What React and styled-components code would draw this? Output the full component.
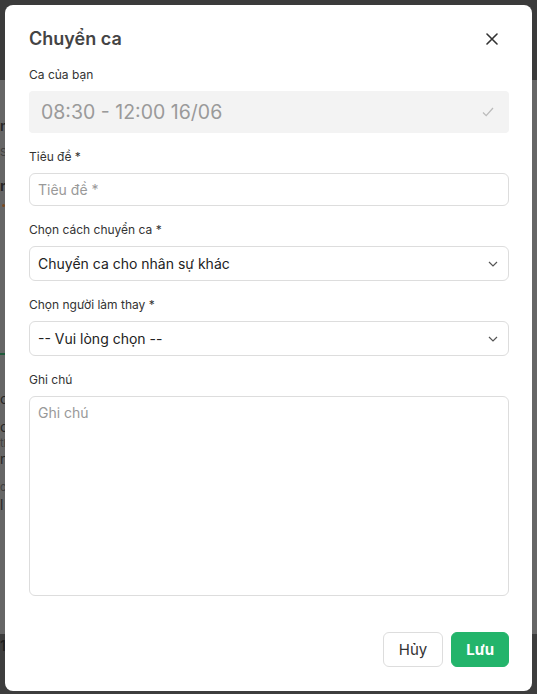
import React from 'react';
import styled, { createGlobalStyle } from 'styled-components';

const GlobalStyle = createGlobalStyle`
  html, body {
    margin: 0;
    padding: 0;
  }
  body {
    font-family: Inter, "Noto Sans", "Liberation Sans", sans-serif;
    background: #666;
  }
`;

export default function App() {
  return (
    <>
      <GlobalStyle />
      <Screen>
        <BackHeader />
        <BackMain>
          <Peek $top={38} $weight={600}>n</Peek>
          <Peek $top={10} $size={11} $color="#3f3f3f">S/</Peek>
          <Peek $top={18} $weight={700}>n</Peek>
          <Dot />
          <GreenLine />
          <Peek $top={36}>c</Peek>
          <Peek $top={12}>c</Peek>
          <Peek $top={0} $size={11} $color="#3f3f3f">tl</Peek>
          <Peek $top={0}>n</Peek>
          <Peek $top={12} $size={11} $color="#3f3f3f">c</Peek>
          <Peek $top={2}>l</Peek>
        </BackMain>
        <BackFooter>
          <Peek $top={4} $weight={600} $color="#1f1f1f">13</Peek>
        </BackFooter>

        <Modal>
          <Header>
            <Title>Chuyển ca</Title>
            <CloseButton aria-label="close">
              <svg width="12" height="12" viewBox="0 0 12 12">
                <path d="M1 1 L11 11 M11 1 L1 11" stroke="#333" strokeWidth="1.6" strokeLinecap="round" />
              </svg>
            </CloseButton>
          </Header>

          <Field>
            <Label>Ca của bạn</Label>
            <ReadOnlyBox>
              <span>08:30 - 12:00 16/06</span>
              <svg width="12" height="10" viewBox="0 0 12 10">
                <path d="M1 5.5 L4.2 8.6 L11 1" stroke="#bbb" strokeWidth="1.3" fill="none" />
              </svg>
            </ReadOnlyBox>
          </Field>

          <Field>
            <Label>Tiêu đề *</Label>
            <TextInput placeholder="Tiêu đề *" />
          </Field>

          <Field>
            <Label>Chọn cách chuyển ca *</Label>
            <SelectBox>
              <span>Chuyển ca cho nhân sự khác</span>
              <Chevron />
            </SelectBox>
          </Field>

          <Field>
            <Label>Chọn người làm thay *</Label>
            <SelectBox>
              <span>-- Vui lòng chọn --</span>
              <Chevron />
            </SelectBox>
          </Field>

          <Field>
            <Label>Ghi chú</Label>
            <TextArea placeholder="Ghi chú" />
          </Field>

          <Footer>
            <Button>Hủy</Button>
            <Button $primary>Lưu</Button>
          </Footer>
        </Modal>
      </Screen>
    </>
  );
}

function Chevron() {
  return (
    <svg width="10" height="6" viewBox="0 0 10 6">
      <path d="M1 1 L5 5 L9 1" stroke="#555" strokeWidth="1.2" fill="none" />
    </svg>
  );
}

const Screen = styled.div`
  position: relative;
  width: 537px;
  height: 694px;
  overflow: hidden;
  display: flex;
  flex-direction: column;
`;

const BackHeader = styled.div`
  height: 80px;
  background: #3b3b3b;
`;

const BackMain = styled.div`
  flex: 1;
  background: #666;
  display: flex;
  flex-direction: column;
  align-items: flex-start;
`;

const BackFooter = styled.div`
  height: 60px;
  background: #3d3d3d;
`;

const Peek = styled.div`
  margin-top: ${(p) => p.$top}px;
  font-size: ${(p) => p.$size || 14}px;
  font-weight: ${(p) => p.$weight || 400};
  color: ${(p) => p.$color || '#262626'};
  line-height: 16px;
`;

const Dot = styled.div`
  margin-top: 10px;
  margin-left: 2px;
  width: 3px;
  height: 3px;
  border-radius: 50%;
  background: #7a4a20;
`;

const GreenLine = styled.div`
  margin-top: 146px;
  width: 10px;
  height: 2px;
  background: #1f5a3a;
`;

const Modal = styled.div`
  position: absolute;
  top: 5px;
  left: 5px;
  width: 527px;
  height: 686px;
  box-sizing: border-box;
  background: #fff;
  border-radius: 8px;
  padding: 22px 23px 24px 24px;
  display: flex;
  flex-direction: column;
`;

const Header = styled.div`
  display: flex;
  align-items: center;
  justify-content: space-between;
  height: 24px;
  margin-bottom: 15px;
`;

const Title = styled.h2`
  margin: 0;
  font-size: 18px;
  font-weight: 600;
  color: #444;
  line-height: 24px;
`;

const CloseButton = styled.button`
  border: 0;
  background: none;
  padding: 0;
  margin-right: 11px;
  display: flex;
  cursor: pointer;
`;

const Field = styled.div`
  display: flex;
  flex-direction: column;
  margin-bottom: 15px;
`;

const Label = styled.label`
  font-size: 12px;
  line-height: 18px;
  color: #333;
  margin-bottom: 7px;
`;

const ReadOnlyBox = styled.div`
  height: 42px;
  box-sizing: border-box;
  background: #f3f3f3;
  border-radius: 4px;
  padding: 0 15px 0 12px;
  display: flex;
  align-items: center;
  justify-content: space-between;
  font-size: 19.5px;
  color: #9a9a9a;
`;

const TextInput = styled.input`
  height: 33px;
  box-sizing: border-box;
  border: 1px solid #ddd;
  border-radius: 6px;
  padding: 0 8px;
  font-family: inherit;
  font-size: 14px;
  color: #222;
  outline: none;
  &::placeholder {
    color: #999;
  }
`;

const SelectBox = styled.div`
  height: 35px;
  box-sizing: border-box;
  border: 1px solid #ddd;
  border-radius: 6px;
  padding: 0 10px 0 8px;
  display: flex;
  align-items: center;
  justify-content: space-between;
  font-size: 14px;
  color: #222;
`;

const TextArea = styled.textarea`
  height: 200px;
  box-sizing: border-box;
  border: 1px solid #ddd;
  border-radius: 6px;
  padding: 7px 8px;
  font-family: inherit;
  font-size: 14px;
  color: #222;
  resize: none;
  outline: none;
  &::placeholder {
    color: #999;
  }
`;

const Footer = styled.div`
  margin-top: auto;
  display: flex;
  justify-content: flex-end;
  gap: 8px;
`;

const Button = styled.button`
  height: 35px;
  box-sizing: border-box;
  padding: 0 ${(p) => (p.$primary ? 14 : 15)}px;
  border-radius: 6px;
  font-family: inherit;
  font-size: 15px;
  font-weight: ${(p) => (p.$primary ? 700 : 400)};
  border: 1px solid ${(p) => (p.$primary ? '#23b46b' : '#ddd')};
  background: ${(p) => (p.$primary ? '#23b46b' : '#fff')};
  color: ${(p) => (p.$primary ? '#fff' : '#333')};
  cursor: pointer;
`;
